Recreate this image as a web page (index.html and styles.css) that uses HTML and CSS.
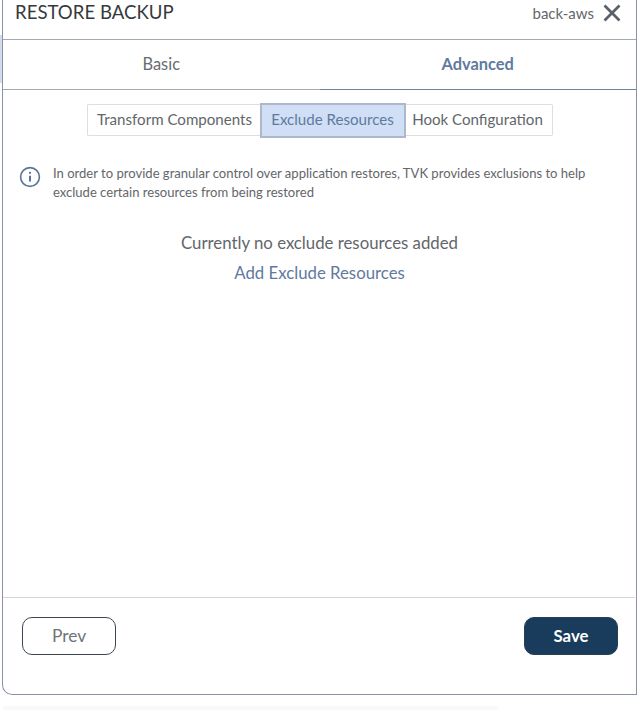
FILE: index.html
```html
<!DOCTYPE html>
<html lang="en">
<head>
<meta charset="utf-8">
<title>Restore Backup</title>
<link rel="stylesheet" href="styles.css">
</head>
<body>
<div class="backdrop-tab"></div>
<div class="backdrop-row"></div>
<div class="modal">
  <header class="head">
    <h1 class="title">RESTORE BACKUP</h1>
    <div class="head-right">
      <span class="name">back-aws</span>
      <svg class="close" width="20" height="20" viewBox="0 0 20 20" aria-hidden="true"><path d="M2.5 2.5 L17.5 17.5 M17.5 2.5 L2.5 17.5" fill="none" stroke="#5c6167" stroke-width="2.8"/></svg>
    </div>
  </header>
  <nav class="tabs">
    <div class="tab">Basic</div>
    <div class="tab tab-active">Advanced</div>
  </nav>
  <main class="body">
    <div class="segments">
      <div class="seg seg-first">Transform Components</div>
      <div class="seg seg-active">Exclude Resources</div>
      <div class="seg seg-last">Hook Configuration</div>
    </div>
    <div class="info">
      <svg class="info-icon" width="22" height="22" viewBox="0 0 22 22" aria-hidden="true"><circle cx="11" cy="11" r="9.4" fill="none" stroke="#5b7597" stroke-width="1.6"/><circle cx="11" cy="6.9" r="1.1" fill="#5b7597"/><path d="M11 9.8 V15.4" stroke="#5b7597" stroke-width="2" fill="none"/></svg>
      <p class="info-text">In order to provide granular control over application restores, TVK provides exclusions to help exclude certain resources from being restored</p>
    </div>
    <p class="empty">Currently no exclude resources added</p>
    <a class="add">Add Exclude Resources</a>
  </main>
  <footer class="foot">
    <button class="btn btn-prev">Prev</button>
    <button class="btn btn-save">Save</button>
  </footer>
</div>
</body>
</html>
```
FILE: styles.css
```css
* { box-sizing: border-box; }
html, body { margin: 0; padding: 0; background: #fff; }
body { position: relative; font-family: Lato, "Open Sans", sans-serif; color: #63666a; width: 638px; height: 710px; overflow: hidden; }
.backdrop-tab { position: absolute; left: 0; top: 35px; width: 2px; height: 48px; background: #d3dbec; }
.backdrop-row { position: absolute; left: 3px; top: 706px; width: 495px; height: 4px; background: #f8f9f9; }
.modal {
  position: relative;
  margin-left: 2px;
  width: 635px;
  height: 695px;
  border: 1px solid #8a93a6;
  border-top: 0;
  border-radius: 0 0 0 10px;
  display: flex;
  flex-direction: column;
}
.head {
  height: 40px;
  flex: none;
  display: flex;
  justify-content: space-between;
  align-items: flex-start;
  padding: 0 14px 0 12px;
  border-bottom: 1px solid #a3a9b2;
}
.title { margin: 0; font-size: 18.6px; font-weight: 400; color: #36393c; line-height: 24px; }
.head-right { display: flex; align-items: center; gap: 8px; height: 25px; }
.name { font-size: 15px; color: #63666a; }
.close { display: block; }
.tabs { height: 50px; flex: none; display: flex; }
.tab {
  flex: 1;
  display: flex;
  align-items: center;
  justify-content: center;
  font-size: 16.4px;
  color: #696c70;
  border-bottom: 1px solid #a3a9b2;
  padding-bottom: 3px;
}
.tab-active { color: #5f7a9e; font-weight: 700; border-bottom-color: #6d83a3; }
.body { flex: 1; display: flex; flex-direction: column; align-items: center; padding-top: 14px; min-height: 0; }
.segments { display: flex; height: 32px; align-items: stretch; }
.seg {
  display: flex;
  align-items: center;
  justify-content: center;
  font-size: 15.1px;
  color: #63666a;
  border: 1px solid #dcdee1;
  background: #fff;
  padding-bottom: 3px;
}
.seg-first { width: 173px; border-radius: 2px 0 0 2px; border-right: 0; padding-left: 2px; }
.seg-active {
  width: 146px;
  color: #5f7a9e;
  background: #d0dff5;
  border: 2px solid #adb9cb;
  height: 35px;
  align-self: center;
  padding-bottom: 2px;
}
.seg-last { width: 147px; border-left: 0; border-radius: 0 2px 2px 0; padding-right: 2px; }
.info { align-self: stretch; display: flex; gap: 12px; padding: 28px 40px 0 16px; }
.info-icon { flex: none; margin-top: 2px; }
.info-text { margin: 0; font-size: 13.05px; line-height: 19px; color: #63666a; }
.empty { margin: 30px 0 0; font-size: 16.8px; line-height: 22px; color: #63666a; }
.add { margin-top: 8px; font-size: 16.8px; line-height: 22px; color: #5f7a9e; }
.foot {
  height: 97px;
  flex: none;
  border-top: 1px solid #d6d8db;
  margin-right: 1px;
  display: flex;
  justify-content: space-between;
  align-items: flex-start;
  padding: 19px 17px 0 19px;
}
.btn { width: 94px; height: 38px; border-radius: 10px; font-family: inherit; font-size: 16.8px; padding: 0 0 2px; }
.btn-prev { background: #fff; border: 1px solid #3d4752; color: #6f7276; font-size: 17.4px; }
.btn-save { background: #193c5c; border: 1px solid #2b3f52; color: #fff; font-weight: 700; }
```
